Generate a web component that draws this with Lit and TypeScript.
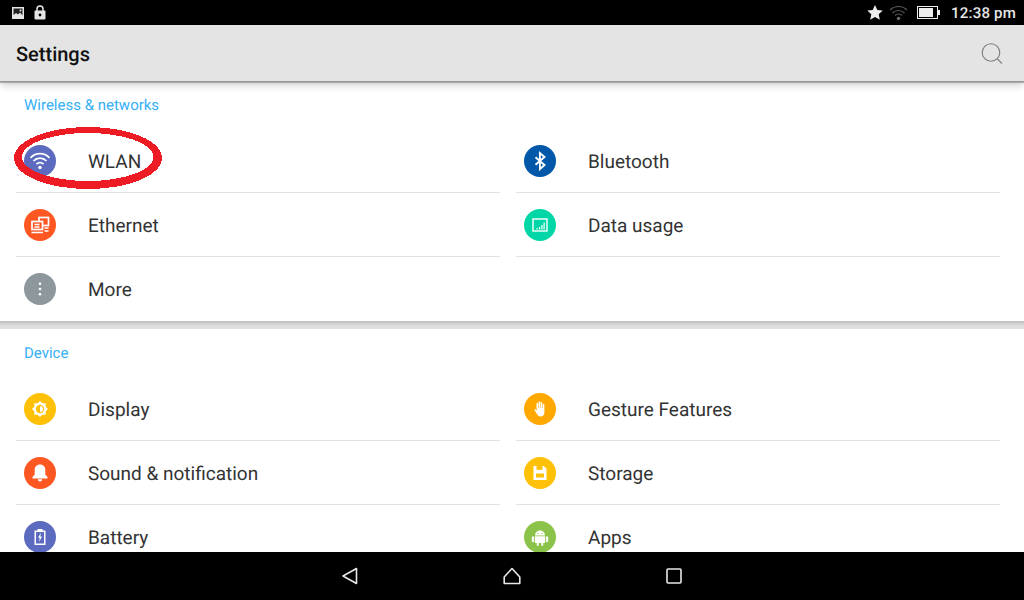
import { LitElement, html, css, svg } from "lit";
import { customElement } from "lit/decorators.js";

const I = {
  wifi: svg`<g transform="translate(0 -1)"><path d="M6.500 13.800a13 13 0 0 1 19 0M9.500 17a9 9 0 0 1 13 0M12.400 20.100a5 5 0 0 1 7.200 0" fill="none" stroke="#fff" stroke-width="1.700"/><circle cx="16" cy="23.500" r="1.700" fill="#fff"/></g>`,
  eth: svg`<g fill="none" stroke="#fff" stroke-width="1.700"><rect x="15" y="8.500" width="9.500" height="8"/><rect x="8" y="12.500" width="10.500" height="8" fill="#ff5722"/><path d="M7.500 23.500h11.500M20.500 19h4M20.500 22h4"/><path d="M10.500 15.500h5M10.500 18h5"/></g>`,
  more: svg`<g fill="#fff"><circle cx="16" cy="10.800" r="1.300"/><circle cx="16" cy="16" r="1.300"/><circle cx="16" cy="21.200" r="1.300"/></g>`,
  bt: svg`<path d="M11.500 12.200l9 7.800-4.600 4.200V8l4.600 4-9 7.800" fill="none" stroke="#fff" stroke-width="1.900"/>`,
  data: svg`<rect x="9" y="10" width="14" height="12" fill="none" stroke="#fff" stroke-width="1.400"/><path d="M12.500 20.500h1.200v-1.500h-1.200zM15 20.500h1.200v-2.500H15zM17.300 20.500h1.200v-4.500h-1.200zM19.500 20.500h1.200v-7h-1.200z" fill="#fff"/>`,
  display: svg`<path d="M16 8l2.300 2.300h3.400v3.400L24 16l-2.300 2.300v3.400h-3.400L16 24l-2.300-2.300h-3.400v-3.400L8 16l2.300-2.300v-3.400h3.400z" fill="#fff"/><circle cx="16" cy="16" r="4.200" fill="#ffc107"/><path d="M16 13a3 3 0 0 1 0 6z" fill="#fff"/>`,
  bell: svg`<path d="M16 7.500c-3.400 0-5.300 2.400-5.300 5.500v4.500L8.500 20v1.500h15V20l-2.200-2.500V13c0-3.100-1.900-5.500-5.300-5.500z" fill="#fff"/><path d="M13.800 22.300h4.400a2.200 2.200 0 0 1-4.400 0z" fill="#fff"/>`,
  batt: svg`<path d="M13.500 8h5v1.500h3v14.500h-11V9.500h3z" fill="#fff"/><rect x="12" y="11" width="8" height="11.500" fill="#5c6bc0"/><path d="M17 11.500l-3 5.300h1.800l-.8 4.200 3-5.500h-1.800z" fill="#fff"/>`,
  hand: svg`<path d="M12.500 15v-4.500a.8.800 0 0 1 1.600 0V15h.5V9a.8.800 0 0 1 1.600 0v6h.5V9.800a.8.800 0 0 1 1.600 0V15h.5v-3.200a.8.800 0 0 1 1.600 0v7.700c0 2.500-1.600 4-3.700 4-2.500 0-3.200-1.300-4.200-3.200l-2.200-3.600c.8-.8 1.800-.6 2.400.2l.6.900z" fill="#fff"/>`,
  save: svg`<path d="M9.500 9h10.300l2.700 2.700V23H9.500z" fill="#fff"/><rect x="12.500" y="9" width="6" height="3.800" fill="#ffc107"/><rect x="12" y="16.500" width="8" height="4" fill="#ffc107"/>`,
  android: svg`<path d="M11 14.500a5 5 0 0 1 10 0z" fill="#fff"/><path d="M11 15.300h10v6.700h-1.800v2.700h-1.900V22h-2.600v2.700h-1.900V22H11z" fill="#fff"/><rect x="7.800" y="15.300" width="2.400" height="6" rx="1.200" fill="#fff"/><rect x="21.800" y="15.300" width="2.400" height="6" rx="1.200" fill="#fff"/><circle cx="14" cy="12.600" r=".7" fill="#8bc34a"/><circle cx="18" cy="12.600" r=".7" fill="#8bc34a"/>`,
};

type Item = { label: string; color: string; icon: unknown };

const wireless: Item[] = [
  { label: "WLAN", color: "#5c6bc0", icon: I.wifi },
  { label: "Bluetooth", color: "#0258a8", icon: I.bt },
  { label: "Ethernet", color: "#ff5722", icon: I.eth },
  { label: "Data usage", color: "#00d6a6", icon: I.data },
  { label: "More", color: "#8d979c", icon: I.more },
];
const device: Item[] = [
  { label: "Display", color: "#ffc107", icon: I.display },
  { label: "Gesture Features", color: "#ffa800", icon: I.hand },
  { label: "Sound & notification", color: "#ff5722", icon: I.bell },
  { label: "Storage", color: "#ffc107", icon: I.save },
  { label: "Battery", color: "#5c6bc0", icon: I.batt },
  { label: "Apps", color: "#8bc34a", icon: I.android },
];

@customElement("app-root")
export class AppRoot extends LitElement {
  static styles = css`
    :host {
      display: flex;
      flex-direction: column;
      width: 1024px;
      height: 600px;
      overflow: hidden;
      position: relative;
      background: #fff;
      font-family: Roboto, "Noto Sans", sans-serif;
      text-rendering: geometricPrecision;
    }
    .status {
      height: 25px;
      flex: none;
      background: #000;
      display: flex;
      align-items: center;
      padding: 0 8px 0 12px;
      color: #e6e6e6;
      font-size: 15px;
      font-weight: 500;
    }
    .status .left { display: flex; gap: 10px; align-items: center; }
    .status .right { margin-left: auto; display: flex; align-items: center; }
    .status svg { display: block; }
    .star { margin-right: 6px; }
    .wifi { margin-right: 9px; }
    .battery { margin-right: 11px; }
    .time { letter-spacing: 0.2px; }
    .toolbar {
      height: 57px;
      flex: none;
      background: #e4e4e4;
      border-bottom: 1px solid #969696;
      box-sizing: border-box;
      box-shadow: 0 1px 1px rgba(0, 0, 0, 0.22), 0 3px 8px rgba(0, 0, 0, 0.2);
      display: flex;
      align-items: center;
      justify-content: space-between;
      padding: 0 21px 0 16px;
      position: relative;
      z-index: 1;
    }
    .title { font-size: 20px; font-weight: 500; color: #111; padding-top: 2px; }
    .content { flex: 1; min-height: 0; overflow: hidden; }
    .head {
      height: 48px;
      box-sizing: border-box;
      padding: 0 24px;
      display: flex;
      align-items: center;
      font-size: 15px;
      color: #35b0f5;
    }
    .head.first { height: 47px; padding-bottom: 2px; }
    .grid {
      display: grid;
      grid-template-columns: 484px 484px;
      column-gap: 16px;
      padding: 0 16px;
    }
    .row {
      height: 64px;
      box-sizing: border-box;
      padding-left: 8px;
      display: flex;
      align-items: center;
      gap: 32px;
      font-size: 19px;
      color: #333;
      border-bottom: 1px solid #e3e3e3;
    }
    .row span { padding-top: 2px; }
    .row.last { border-bottom-color: transparent; }
    .row svg { display: block; flex: none; }
    .sep {
      height: 8px;
      background: linear-gradient(#bcbcbc, #d8d8d8 45%, #e2e2e2);
    }
    .nav {
      height: 48px;
      flex: none;
      background: #000;
      display: flex;
      justify-content: center;
      align-items: center;
      gap: 144px;
      position: relative;
    }
    .nav svg { display: block; }
    .ring {
      position: absolute;
      left: 0;
      top: 0;
      pointer-events: none;
      shape-rendering: crispEdges;
    }
  `;

  private circle(it: Item) {
    return html`<svg width="32" height="32" viewBox="0 0 32 32">
      <circle cx="16" cy="16" r="16" fill=${it.color}></circle>${it.icon}
    </svg>`;
  }

  private rows(items: Item[], lastFrom: number) {
    return html`<div class="grid">
      ${items.map(
        (it, i) => html`<div class="row ${i >= lastFrom ? "last" : ""}">${this.circle(it)}<span>${it.label}</span></div>`
      )}
    </div>`;
  }

  render() {
    return html`
      <div class="status">
        <div class="left">
          <svg width="12" height="12" viewBox="0 0 12 12">
            <path d="M0 0h12v12H0z" fill="#e6e6e6"/>
            <path d="M1.500 1.500h9v7l-2.500-3-2 2-2-1.500-2.500 2z" fill="#222"/>
            <circle cx="8.500" cy="3.500" r="1" fill="#e6e6e6"/>
          </svg>
          <svg width="12" height="15" viewBox="0 0 12 15">
            <path d="M3 6V4a3 3 0 0 1 6 0v2" fill="none" stroke="#e6e6e6" stroke-width="1.500"/>
            <rect x="0.500" y="5.500" width="11" height="9" rx="1" fill="#e6e6e6"/>
            <circle cx="6" cy="10" r="1.400" fill="#000"/>
          </svg>
        </div>
        <div class="right">
          <svg class="star" width="16" height="15" viewBox="0 0 16 15">
            <path d="M8 0l2.300 5 5.400.6-4 3.700 1.100 5.400L8 12l-4.800 2.700 1.100-5.400-4-3.700 5.400-.6z" fill="#eee"/>
          </svg>
          <svg class="wifi" width="19" height="16" viewBox="0 0 19 16">
            <path d="M1 5a12 12 0 0 1 17 0M3.500 8a8.500 8.500 0 0 1 12 0M6 10.500a5 5 0 0 1 7 0" fill="none" stroke="#5c5c5c" stroke-width="1.100"/>
            <circle cx="9.500" cy="13.500" r="1.800" fill="#666"/>
          </svg>
          <svg class="battery" width="23" height="13" viewBox="0 0 23 13">
            <rect x="0.500" y="0.500" width="20" height="12" fill="none" stroke="#eee"/>
            <rect x="2" y="2" width="14" height="9" fill="#eee"/>
            <rect x="21" y="4" width="2" height="5" fill="#eee"/>
          </svg>
          <span class="time">12:38 pm</span>
        </div>
      </div>
      <div class="toolbar">
        <div class="title">Settings</div>
        <svg width="22" height="22" viewBox="0 0 22 22">
          <circle cx="10" cy="10.500" r="8.800" fill="none" stroke="#7c7c7c" stroke-width="1.100"/>
          <path d="M16.300 16.800l4.700 4.700" stroke="#7c7c7c" stroke-width="1.100"/>
        </svg>
      </div>
      <div class="content">
        <div class="head first">Wireless &amp; networks</div>
        ${this.rows(wireless, 4)}
        <div class="sep"></div>
        <div class="head">Device</div>
        ${this.rows(device, 6)}
      </div>
      <div class="nav">
        <svg width="18" height="18" viewBox="0 0 18 18">
          <path d="M15.500 1.500v15L2 9z" fill="none" stroke="#e8e8e8" stroke-width="1.600" stroke-linejoin="round"/>
        </svg>
        <svg width="18" height="18" viewBox="0 0 18 18">
          <path d="M9 1.500l7.800 8.500v6.500H1.200V10z" fill="none" stroke="#e8e8e8" stroke-width="1.600" stroke-linejoin="round"/>
        </svg>
        <svg width="18" height="18" viewBox="0 0 18 18">
          <rect x="2" y="2" width="14" height="14" rx="1" fill="none" stroke="#e8e8e8" stroke-width="1.600"/>
        </svg>
      </div>
      <svg class="ring" width="200" height="220" viewBox="0 0 200 220">
        <path fill="#ed1c24" fill-rule="evenodd" d="M14 158a74 31 0 1 0 148 0a74 31 0 1 0-148 0zM22 157a65.750 24 0 1 1 131.500 0a65.750 24 0 1 1-131.500 0z"/>
      </svg>
    `;
  }
}
